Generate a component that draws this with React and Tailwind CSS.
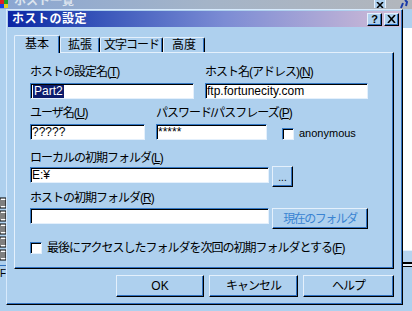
import React from "react";

// raised (button-like) and sunken (edit-like) frames in the light-blue theme
const raised =
  "border border-t-[#e4f0fc] border-l-[#e4f0fc] border-r-black border-b-black shadow-[inset_-1px_-1px_0_#2f70c0]";
const sunken =
  "border border-t-[#3478c4] border-l-[#3478c4] border-r-[#e4f0fc] border-b-[#e4f0fc] shadow-[inset_1px_1px_0_#000] bg-white";

function Label({ text, k }) {
  return (
    <div className="h-[16px] leading-[16px] tracking-[-1px] whitespace-nowrap">
      {text}(<u>{k}</u>)
    </div>
  );
}

function Edit({ className = "", children }) {
  return (
    <div className={`flex h-[16px] items-center overflow-hidden pl-[1px] text-[12px] leading-[12px] ${sunken} ${className}`}>
      {children}
    </div>
  );
}

function Button({ className = "", children }) {
  return (
    <div className={`flex items-center justify-center bg-[#aed0ee] ${raised} ${className}`}>
      {children}
    </div>
  );
}

function CheckBox() {
  return <div className={`h-[12px] w-[12px] shrink-0 ${sunken}`} />;
}

function FileIcon() {
  return (
    <svg width="6" height="12" viewBox="0 0 6 12" className="block">
      <rect x="0" y="1" width="6" height="10" fill="#fff" stroke="#000" strokeWidth="1" />
      <line x1="1" y1="4" x2="6" y2="4" stroke="#000" />
      <line x1="1" y1="6" x2="6" y2="6" stroke="#000" />
      <line x1="1" y1="8" x2="6" y2="8" stroke="#000" />
    </svg>
  );
}

export default function App() {
  return (
    <div className="relative h-[311px] w-[412px] overflow-hidden bg-[#aed0ee] font-['Liberation_Sans','Noto_Sans_CJK_JP',sans-serif] text-[12px] text-black">
      {/* window behind the dialog */}
      <div className="flex h-full flex-col">
        <div className="flex h-[9px] items-start overflow-hidden bg-linear-to-r from-[#8aa6d2] via-[#a4b4c8] to-[#b2b6bc]">
          <svg width="8" height="8" viewBox="0 0 8 8" className="block shrink-0">
            <rect x="0" y="0" width="4" height="4" fill="#e02020" />
            <rect x="4" y="0" width="4" height="4" fill="#20a020" />
            <rect x="0" y="4" width="4" height="4" fill="#2040e0" />
            <rect x="4" y="4" width="4" height="4" fill="#e0d020" />
          </svg>
          <span className="-mt-[5px] ml-[6px] font-bold leading-[12px] text-[#dce4ee]">ホスト一覧</span>
          <div className="ml-auto flex h-[8px] w-[12px] items-end justify-center border-l border-r border-[#e4f0fc] bg-[#aed0ee]">
            <svg width="8" height="6" viewBox="0 0 8 6">
              <path d="M1 0 L7 6 M7 0 L1 6" stroke="#000" strokeWidth="1.5" />
            </svg>
          </div>
          <div className="ml-[14px] mr-[4px] h-[9px] w-[8px]">
            <svg width="8" height="9" viewBox="0 0 8 9">
              <path d="M1 8 L3 3 M5 0 L7 2 L6 6" stroke="#1a3aa8" strokeWidth="2" fill="none" />
            </svg>
          </div>
        </div>
        <div className="flex flex-1">
          <div className="flex w-[6px] flex-col pt-[188px]">
            <FileIcon />
            <div className="h-[1px]" />
            <FileIcon />
            <div className="h-[1px]" />
            <FileIcon />
            <div className="h-[1px]" />
            <FileIcon />
            <div className="h-[1px]" />
            <FileIcon />
            <div className="mt-[4px] h-[1px] bg-[#2f70c0]" />
            <div className="mt-[3px] text-[10px] leading-[10px]">Fl</div>
          </div>
          <div className="flex-1" />
          <div className="flex w-[9px] flex-col">
            <div className="h-[19px]" />
            <div className="h-[222px] bg-white" />
            <div className="h-[12px] border-t border-[#e4f0fc] bg-[#b6d4f0]" />
            <div className="h-[2px] bg-black" />
            <div className="h-[2px] bg-[#e4f0fc]" />
            <div className="h-[1px] bg-black" />
          </div>
        </div>
      </div>

      {/* ホストの設定 dialog */}
      <div className="absolute left-[6px] top-[9px] flex h-[296px] w-[397px] flex-col border border-t-[#d8eafc] border-l-[#d8eafc] border-r-black border-b-black bg-[#aed0ee] p-[1px] shadow-[inset_-1px_-1px_0_#2f70c0]">
        <div className="flex h-[16px] items-center bg-linear-to-r from-[#0c24a4] via-[#7c8cd4] via-55% to-[#d2bcd6] pl-[4px] pr-[2px]">
          <span className="font-bold leading-[16px] tracking-[0.5px] text-white">ホストの設定</span>
          <Button className="ml-auto h-[13px] w-[15px] text-[11px] font-bold leading-[11px]">?</Button>
          <Button className="ml-[2px] h-[13px] w-[15px]">
            <svg width="9" height="8" viewBox="0 0 9 8">
              <path d="M1 0 L8 8 M8 0 L1 8" stroke="#000" strokeWidth="1.6" />
            </svg>
          </Button>
        </div>

        <div className="flex flex-col pl-[6px] pt-[8px]">
          {/* tabs */}
          <div className="flex h-[17px] items-end">
            <div className="relative z-10 -mb-[1px] flex h-[18px] w-[46px] items-start justify-center rounded-t-[2px] border-l border-t border-r border-l-[#e4f0fc] border-t-[#e4f0fc] border-r-black bg-[#aed0ee] pt-[1px] shadow-[inset_-1px_0_0_#2f70c0]">
              <span className="leading-[14px]">基本</span>
            </div>
            <div className="flex h-[15px] w-[40px] items-start justify-center rounded-t-[2px] border-l border-t border-r border-l-[#e4f0fc] border-t-[#e4f0fc] border-r-black shadow-[inset_-1px_0_0_#2f70c0]">
              <span className="leading-[14px]">拡張</span>
            </div>
            <div className="flex h-[15px] w-[63px] items-start justify-center rounded-t-[2px] border-l border-t border-r border-l-[#e4f0fc] border-t-[#e4f0fc] border-r-black shadow-[inset_-1px_0_0_#2f70c0]">
              <span className="leading-[14px] tracking-[-1px]">文字コード</span>
            </div>
            <div className="flex h-[15px] w-[42px] items-start justify-center rounded-t-[2px] border-l border-t border-r border-l-[#e4f0fc] border-t-[#e4f0fc] border-r-black shadow-[inset_-1px_0_0_#2f70c0]">
              <span className="leading-[14px]">高度</span>
            </div>
          </div>

          {/* tab page */}
          <div className="flex h-[217px] w-[380px] flex-col border border-t-[#e4f0fc] border-l-[#e4f0fc] border-r-black border-b-black pl-[15px] pt-[11px] shadow-[inset_-1px_-1px_0_#2f70c0]">
            <div className="flex gap-[11px]">
              <div className="flex w-[164px] flex-col">
                <Label text="ホストの設定名" k="T" />
                <Edit className="mt-[3px] w-[164px]">
                  <span className="ml-[1px] bg-[#0c1c6c] px-[1px] leading-[13px] text-white">Part2</span>
                </Edit>
              </div>
              <div className="flex w-[163px] flex-col">
                <Label text="ホスト名(アドレス)" k="N" />
                <Edit className="mt-[3px] w-[163px]">ftp.fortunecity.com</Edit>
              </div>
            </div>

            <div className="mt-[6px] flex">
              <div className="flex w-[115px] flex-col">
                <Label text="ユーザ名" k="U" />
                <Edit className="mt-[3px] w-[115px]">?????</Edit>
              </div>
              <div className="ml-[11px] flex w-[111px] flex-col">
                <Label text="パスワード/パスフレーズ" k="P" />
                <Edit className="mt-[3px] w-[111px]">*****</Edit>
              </div>
              <div className="ml-[15px] flex h-[35px] items-end gap-[5px]">
                <CheckBox />
                <span className="text-[11px] leading-[13px]">anonymous</span>
              </div>
            </div>

            <div className="mt-[10px] flex flex-col">
              <Label text="ローカルの初期フォルダ" k="L" />
              <div className="flex items-start gap-[3px]">
                <Edit className="mt-[1px] w-[239px]">E:¥</Edit>
                <Button className="h-[21px] w-[21px] pt-[2px] text-[10px] leading-[10px]">...</Button>
              </div>
            </div>

            <div className="mt-[3px] flex flex-col">
              <Label text="ホストの初期フォルダ" k="R" />
              <div className="mt-[2px] flex items-start gap-[3px]">
                <Edit className="w-[239px]" />
                <Button className="h-[21px] w-[96px] tracking-[-1.5px] text-[#3a84d2]">現在のフォルダ</Button>
              </div>
            </div>

            <div className="mt-[11px] flex h-[16px] items-center gap-[5px]">
              <CheckBox />
              <span className="leading-[16px] tracking-[-1px]">
                最後にアクセスしたフォルダを次回の初期フォルダとする(<u>F</u>)
              </span>
            </div>
          </div>

          {/* dialog buttons */}
          <div className="mt-[6px] flex pl-[102px]">
            <Button className="h-[22px] w-[88px]">OK</Button>
            <Button className="ml-[5px] h-[22px] w-[89px] tracking-[-1px]">キャンセル</Button>
            <Button className="ml-[5px] h-[22px] w-[91px] tracking-[-1px]">ヘルプ</Button>
          </div>
        </div>
      </div>
    </div>
  );
}
